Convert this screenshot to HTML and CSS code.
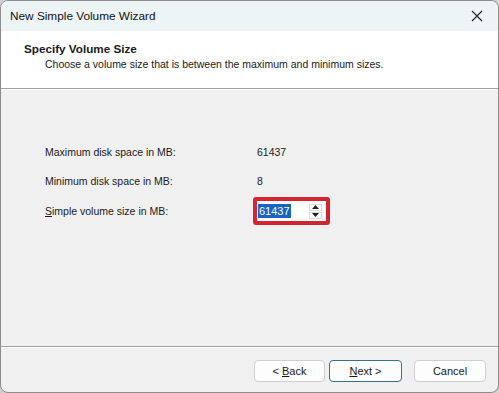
FILE: index.html
```html
<!DOCTYPE html>
<html lang="en">
<head>
<meta charset="UTF-8">
<title>New Simple Volume Wizard</title>
<link rel="stylesheet" href="styles.css">
</head>
<body>
    <div class="window">
        <div class="titlebar">
            <span class="title">New Simple Volume Wizard</span>
            <svg class="close" width="12" height="12" viewBox="0 0 12 12">
                <path d="M1 1 L11 11 M11 1 L1 11" stroke="#222" stroke-width="1.1" fill="none"/>
            </svg>
        </div>
        <div class="header">
            <div class="heading">Specify Volume Size</div>
            <div class="subheading">Choose a volume size that is between the maximum and minimum sizes.</div>
        </div>
        <div class="content">
            <div class="row">
                <span class="label">Maximum disk space in MB:</span>
                <span class="value">61437</span>
            </div>
            <div class="row">
                <span class="label">Minimum disk space in MB:</span>
                <span class="value">8</span>
            </div>
            <div class="row last">
                <span class="label"><u>S</u>imple volume size in MB:</span>
                <div class="highlight">
                    <div class="spinbox">
                        <span class="selected">61437</span>
                        <div class="spin">
                            <div class="spin-btn"><svg width="7" height="4" viewBox="0 0 7 4"><path d="M3.5 0 L7 4 L0 4 Z" fill="#222"/></svg></div>
                            <div class="spin-btn"><svg width="7" height="4" viewBox="0 0 7 4"><path d="M0 0 L7 0 L3.5 4 Z" fill="#222"/></svg></div>
                        </div>
                    </div>
                </div>
            </div>
        </div>
        <div class="footer">
            <button type="button" class="btn">&lt; <u>B</u>ack</button>
            <button type="button" class="btn default"><u>N</u>ext &gt;</button>
            <button type="button" class="btn cancel">Cancel</button>
        </div>
    </div>
</body>
</html>
```

FILE: styles.css
```css
body {
    margin: 0;
    padding: 0;
    background-color: #cfcfcf;
    font-family: "Liberation Sans", Arial, sans-serif;
    font-size: 10.5px;
    color: #1a1a1a;
}
.window {
    width: 497px;
    height: 391px;
    border: 1px solid #8c8c8c;
    border-radius: 8px;
    overflow: hidden;
    display: flex;
    flex-direction: column;
    background: #f0f0f0;
}
.titlebar {
    height: 30px;
    flex-shrink: 0;
    background: #edf4f6;
    display: flex;
    align-items: center;
    justify-content: space-between;
    padding: 0 15px 0 9px;
}
.title {
    font-size: 11.8px;
    color: #111;
}
.header {
    height: 58px;
    flex-shrink: 0;
    background: #fff;
    border-bottom: 1px solid #a0a0a0;
    padding: 10px 0 0 23px;
    box-sizing: border-box;
}
.heading {
    font-weight: bold;
    font-size: 11.7px;
    line-height: 16px;
}
.subheading {
    padding-left: 21px;
    line-height: 14px;
}
.content {
    flex: 1;
    border-top: 1px solid #fff;
    padding: 54px 0 0 44px;
    display: flex;
    flex-direction: column;
    gap: 13px;
}
.row {
    display: flex;
    align-items: center;
    height: 16px;
}
.row.last {
    margin-top: 1px;
}
.label {
    width: 211px;
}
.value {
    padding-left: 1px;
}
.highlight {
    margin-left: -3px;
    border: 4px solid #d32431;
    border-radius: 3px;
    padding: 1px;
    background: #fff;
}
.spinbox {
    width: 67px;
    height: 18px;
    display: flex;
    align-items: center;
    justify-content: space-between;
    background: #fff;
}
.selected {
    background: #1565c8;
    color: #fff;
    line-height: 14px;
    padding: 0 1px;
    font-size: 11px;
}
.spin {
    display: flex;
    flex-direction: column;
    gap: 1px;
    padding-right: 3px;
}
.spin-btn {
    width: 13px;
    height: 7px;
    border: 1px solid #dcdcdc;
    box-sizing: border-box;
    display: flex;
    align-items: center;
    justify-content: center;
    background: #fafafa;
}
.spin-btn svg {
    display: block;
}
.footer {
    height: 46px;
    flex-shrink: 0;
    border-top: 1px solid #a0a0a0;
    box-shadow: inset 0 1px 0 #fff;
    display: flex;
    justify-content: flex-end;
    align-items: flex-start;
    padding: 13px 12px 0 0;
    box-sizing: border-box;
}
.btn {
    font-family: inherit;
    font-size: 11px;
    color: #1a1a1a;
    height: 22px;
    width: 71px;
    background: #fdfdfd;
    border: 1px solid #cfcfcf;
    border-radius: 4px;
    padding: 0;
    margin-left: 4px;
}
.default {
    width: 73px;
    border-color: #3c6e8c;
}
.cancel {
    width: 72px;
    margin-left: 12px;
}
```
